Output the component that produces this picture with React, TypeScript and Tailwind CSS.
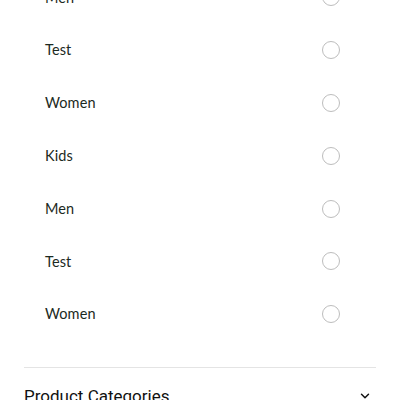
import React from "react";

const items = ["Men", "Test", "Women", "Kids", "Men", "Test", "Women"];

export default function App() {
  return (
    <div className="w-[400px] h-[400px] overflow-hidden bg-white">
      <div className="px-6 -mt-[29px]">
        <ul className="pl-[21px] pr-[36px]">
          {items.map((it, i) => (
            <li key={i} className="h-[52.8px] flex items-center justify-between">
              <span className="text-[14.5px] tracking-[0.1px] text-[#1c2a22]" style={{ fontFamily: "Lato, 'Noto Sans', sans-serif" }}>
                {it}
              </span>
              <span className="w-[18px] h-[18px] rounded-full border-[1.6px] border-[#bdbdbd]" />
            </li>
          ))}
        </ul>
        <div className="mt-[26px] border-t border-[#e4e4e4]" />
        <div className="flex items-center justify-between pt-[16px]">
          <span className="text-[17px] text-[#111]" style={{ fontFamily: "Roboto, sans-serif" }}>
            Product Categories
          </span>
          <svg width="14" height="14" viewBox="0 0 24 24" fill="none" stroke="#111" strokeWidth="2.5" strokeLinecap="round" strokeLinejoin="round" className="mr-[4px]">
            <path d="M6 9l6 6 6-6" />
          </svg>
        </div>
      </div>
    </div>
  );
}
